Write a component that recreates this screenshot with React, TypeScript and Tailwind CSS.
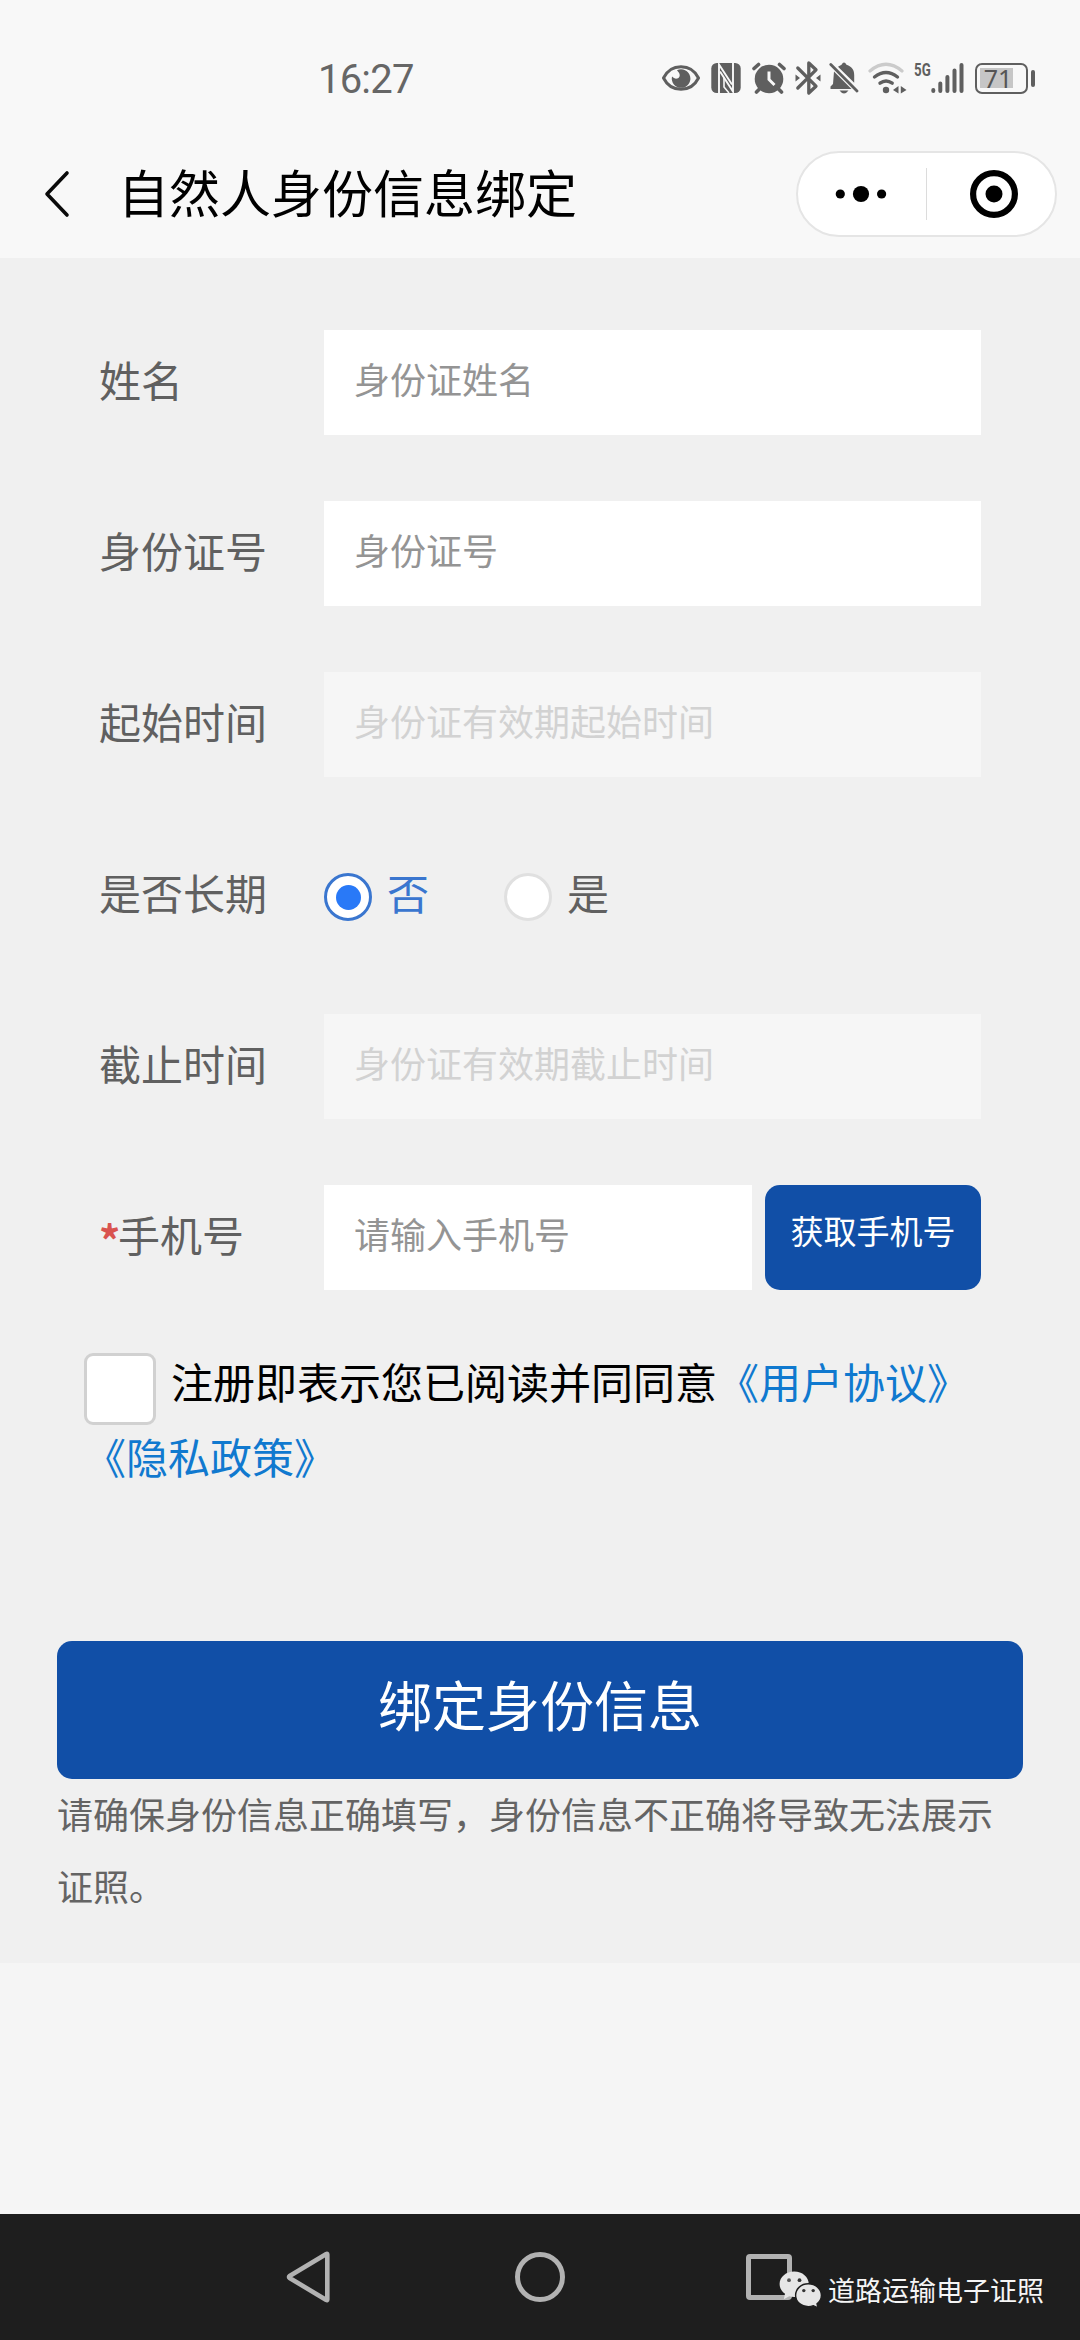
import { useState } from 'react';

type FieldProps = { label: string; placeholder: string; disabled?: boolean };

function EyeIcon() {
  return (
    <svg width="38" height="36" viewBox="0 0 38 36">
      <path d="M1.5 18 C9 3 29 3 36.5 18 C29 33 9 33 1.5 18 Z" fill="none" stroke="#5f5f5f" strokeWidth="3" strokeLinejoin="round" />
      <path d="M15 10.2 A 9.3 9.3 0 1 1 10 16.6 Q 13 20 16.5 18 Q 19.5 15 15 10.2 Z" fill="#5f5f5f" />
    </svg>
  );
}

function NfcIcon() {
  return (
    <svg width="30" height="36" viewBox="0 0 30 36">
      <rect x="0.3" y="3" width="29.4" height="30" rx="5.5" fill="#5f5f5f" />
      <path d="M8 33 V4.5 L21 24.5" fill="none" stroke="#f8f8f8" strokeWidth="1.9" />
      <path d="M22 3 V31.5 L9 11.5" fill="none" stroke="#f8f8f8" strokeWidth="1.9" />
      <path d="M13 17.5 V27 L18 33" fill="none" stroke="#f8f8f8" strokeWidth="1.6" />
    </svg>
  );
}

function AlarmIcon() {
  return (
    <svg width="34" height="36" viewBox="0 0 34 36">
      <circle cx="17" cy="19" r="14.3" fill="#5f5f5f" />
      <path d="M2 8.5 L6.5 4.5 M32 8.5 L27.5 4.5 M4.5 32 L7 29.5 M29.5 32 L27 29.5" stroke="#5f5f5f" strokeWidth="3.6" strokeLinecap="round" />
      <path d="M17 11.5 V19.5 L22.5 25" fill="none" stroke="#f8f8f8" strokeWidth="3" />
    </svg>
  );
}

function BluetoothIcon() {
  return (
    <svg width="26" height="36" viewBox="0 0 26 36">
      <path d="M2.8 8 L21 26.2 L13.8 33 V3 L21 9.8 L2.8 28" fill="none" stroke="#5f5f5f" strokeWidth="3.3" strokeLinecap="round" strokeLinejoin="round" />
      <path d="M0.5 14.5 L5 18 L0.5 21.5 Z M25.5 14.5 L21 18 L25.5 21.5 Z" fill="#5f5f5f" />
    </svg>
  );
}

function BellOffIcon() {
  return (
    <svg width="30" height="36" viewBox="0 0 30 36">
      <path d="M5 11.5 L22.5 29 H1.5 V26.5 L4 24 Z" fill="#5f5f5f" />
      <path d="M9 6.8 L12.5 4.7 Q15 0.5 17.5 4.7 C23 6.5 25.2 10 25.2 15 V22.8 Z" fill="#5f5f5f" />
      <path d="M1.8 4.5 L28 31" stroke="#5f5f5f" strokeWidth="2.8" strokeLinecap="round" />
      <path d="M10.5 30.5 H19.5 Q15 36.5 10.5 30.5 Z" fill="#5f5f5f" />
    </svg>
  );
}

function WifiIcon() {
  return (
    <svg width="40" height="36" viewBox="0 0 40 36">
      <path d="M3 11 Q19 -2.5 35 11" fill="none" stroke="#cbcbcb" strokeWidth="3.2" strokeLinecap="round" />
      <path d="M7.5 17 Q19 7.8 30.5 17" fill="none" stroke="#5f5f5f" strokeWidth="3.4" strokeLinecap="round" />
      <path d="M13 23.2 Q19 18.8 25.2 23.2" fill="none" stroke="#5f5f5f" strokeWidth="3.4" strokeLinecap="round" />
      <circle cx="19" cy="30" r="3.2" fill="#5f5f5f" />
      <path d="M31.5 26 V33.5 L26 30 Z M33.8 26 V33.5 L39.5 30 Z" fill="#5f5f5f" />
    </svg>
  );
}

function SignalIcon() {
  return (
    <svg width="34" height="36" viewBox="0 0 34 36">
      <g stroke="#5f5f5f" strokeWidth="4" strokeLinecap="round">
        <path d="M2.3 30 V31 M9.3 23.5 V31 M16.4 17 V31 M23.5 10.5 V31 M30.5 5 V31" />
      </g>
    </svg>
  );
}

function Battery({ level }: { level: number }) {
  return (
    <div className="flex items-center gap-[3px]">
      <div className="flex h-[31px] w-[53px] items-center rounded-[7px] border-[2.5px] border-[#5f5f5f] px-[3px]">
        <div className="flex h-[20px] w-[33px] items-center justify-center bg-[#c6c6c6]">
          <span className="pl-[3px] font-['Noto_Sans',sans-serif] text-[25px] leading-none text-[#555]">{level}</span>
        </div>
      </div>
      <div className="h-[17px] w-[4px] rounded-full bg-[#5f5f5f]" />
    </div>
  );
}

function StatusBar() {
  return (
    <div className="flex h-[128px] items-end justify-between pr-[45px] pb-[32px] pl-[318px]">
      <span className="h-[36px] pt-[2px] font-['Roboto',sans-serif] text-[40px] leading-[36px] tracking-[-0.8px] text-[#666]">16:27</span>
      <div className="flex h-[36px] items-center">
        <EyeIcon />
        <div className="ml-[11px]"><NfcIcon /></div>
        <div className="ml-[11px]"><AlarmIcon /></div>
        <div className="ml-[9px]"><BluetoothIcon /></div>
        <div className="ml-[8px]"><BellOffIcon /></div>
        <div className="ml-[8px]"><WifiIcon /></div>
        <div className="ml-[7px] flex h-[36px] items-start">
          <span className="w-[17px] origin-left scale-x-[0.7] pt-[1px] font-['Roboto',sans-serif] text-[19px] leading-[18px] font-bold text-[#5f5f5f]">5G</span>
          <SignalIcon />
        </div>
        <div className="ml-[10px]"><Battery level={71} /></div>
      </div>
    </div>
  );
}

function TitleBar() {
  return (
    <div className="flex h-[130px] items-center pt-[2px] pr-[23px] pl-[43px]">
      <svg width="28" height="48" viewBox="0 0 28 48" className="mb-[1px]">
        <path d="M24 3 L4 24 L24 45" fill="none" stroke="#0a0a0a" strokeWidth="3.6" strokeLinecap="round" strokeLinejoin="round" />
      </svg>
      <h1 className="ml-[47px] flex-1 pb-[6px] text-[51px] leading-[60px] text-black">自然人身份信息绑定</h1>
      <div className="flex h-[86px] w-[261px] items-center rounded-full border-2 border-[#e5e5e5] bg-white">
        <svg width="128" height="52" viewBox="0 0 128 52">
          <circle cx="42.3" cy="26" r="4.6" />
          <circle cx="63" cy="26" r="8.1" />
          <circle cx="83.6" cy="26" r="4.6" />
        </svg>
        <div className="h-[52px] w-px bg-[#dcdcdc]" />
        <svg width="128" height="52" viewBox="0 0 128 52">
          <circle cx="67" cy="26" r="20.9" fill="none" stroke="#000" strokeWidth="6.2" />
          <circle cx="67" cy="26" r="8.5" />
        </svg>
      </div>
    </div>
  );
}

function Label({ children }: { children: React.ReactNode }) {
  return <div className="w-[225px] shrink-0 pb-[8px] text-[42px] leading-[60px] text-[#606060]">{children}</div>;
}

function Field({ label, placeholder, disabled = false }: FieldProps) {
  return (
    <div className="flex h-[105px] items-center">
      <Label>{label}</Label>
      <div
        className={
          disabled
            ? 'flex h-full flex-1 items-center bg-[#f6f6f6] px-[30px] pb-[10px] text-[36px] text-[#d2d2d2]'
            : 'flex h-full flex-1 items-center bg-white px-[30px] pb-[10px] text-[36px] text-[#949494]'
        }
      >
        {placeholder}
      </div>
    </div>
  );
}

function Radio({ label, checked, onSelect }: { label: string; checked: boolean; onSelect: () => void }) {
  return (
    <button onClick={onSelect} className="flex items-center gap-[15px]">
      <span
        className={
          checked
            ? 'flex size-[48px] items-center justify-center rounded-full border-3 border-[#3a76cf] bg-white'
            : 'flex size-[48px] items-center justify-center rounded-full border-3 border-[#e0e0e0] bg-white'
        }
      >
        {checked && <span className="size-[25px] rounded-full bg-[#2979f7]" />}
      </span>
      <span
        className={
          checked
            ? 'pb-[11px] text-[42px] leading-[60px] text-[#3a76cf]'
            : 'pb-[11px] text-[42px] leading-[60px] text-[#606060]'
        }
      >
        {label}
      </span>
    </button>
  );
}

function NavBar() {
  return (
    <div className="relative flex h-[126px] items-center bg-[#1e1e1e] pl-[284px]">
      <svg width="50" height="56" viewBox="0 0 50 56">
        <path d="M43.3 5.5 V50.5 Q43.3 51.5 42.3 51 L5.6 29 Q4.4 28 5.6 27 L42.3 5 Q43.3 4.5 43.3 5.5 Z" fill="none" stroke="#b2b2b2" strokeWidth="4.6" strokeLinejoin="round" />
      </svg>
      <div className="ml-[181px] size-[50px] rounded-full border-[5px] border-[#b2b2b2]" />
      <div className="ml-[181px] size-[46px] rounded-[4px] border-[5px] border-[#b2b2b2]" />

      {/* account watermark over the recents button */}
      <div className="absolute top-[55px] left-[779px] flex items-center">
        <svg width="44" height="40" viewBox="0 0 44 40">
          <path d="M15.2 1.5 C7 1.5 0.6 7 0.6 14 C0.6 18 2.6 21.4 6 23.8 L4.8 29.2 L10.2 26.2 C12 26.7 13.6 27 15.2 27 C23.4 27 29.8 21.5 29.8 14.2 C29.8 7 23.4 1.5 15.2 1.5 Z" fill="#e6e6e6" />
          <circle cx="10" cy="10.2" r="1.9" fill="#555" />
          <circle cx="20.5" cy="10.2" r="1.9" fill="#333" />
          <path d="M29.3 13.8 C22.2 13.8 16.6 18.8 16.6 25.3 C16.6 31.8 22.2 36.6 29.3 36.6 C31.2 36.6 32.8 36.3 34.4 35.7 L39 38 L38 33.7 C40.8 31.6 42.4 28.6 42.4 25.3 C42.4 18.8 36.6 13.8 29.3 13.8 Z" fill="#e6e6e6" stroke="#1e1e1e" strokeWidth="1.4" />
          <circle cx="24.8" cy="20.6" r="1.7" fill="#333" />
          <circle cx="34.2" cy="20.6" r="1.7" fill="#333" />
        </svg>
        <span className="ml-[5px] pt-px text-[27px] leading-[40px] text-[#f5f5f5]">道路运输电子证照</span>
      </div>
    </div>
  );
}

export default function App() {
  const [longTerm, setLongTerm] = useState(false);
  const [agreed, setAgreed] = useState(false);

  return (
    <main className="flex h-[2340px] w-[1080px] flex-col overflow-hidden bg-[#f5f5f5] font-['Noto_Sans_CJK_SC',sans-serif]">
      <header className="h-[258px] bg-[#f8f8f8]">
        <StatusBar />
        <TitleBar />
      </header>

      <section className="h-[1705px] bg-[#f0f0f0] pt-[72px]">
        <div className="flex flex-col gap-[66px] pr-[99px] pl-[99px]">
          <Field label="姓名" placeholder="身份证姓名" />
          <Field label="身份证号" placeholder="身份证号" />
          <Field label="起始时间" placeholder="身份证有效期起始时间" disabled />

          <div className="flex h-[105px] items-center">
            <Label>是否长期</Label>
            <div className="flex gap-[75px] pt-[3px]">
              <Radio label="否" checked={!longTerm} onSelect={() => setLongTerm(false)} />
              <Radio label="是" checked={longTerm} onSelect={() => setLongTerm(true)} />
            </div>
          </div>

          <Field label="截止时间" placeholder="身份证有效期截止时间" disabled />

          <div className="flex h-[105px] items-center">
            <Label>
              <span className="relative top-[5px] inline-block w-[19px] font-bold text-[#d9534f]">*</span>手机号
            </Label>
            <div className="flex h-full flex-1 items-center bg-white px-[30px] pb-[10px] text-[36px] text-[#949494]">请输入手机号</div>
            <button className="ml-[13px] h-full w-[216px] rounded-[15px] bg-[#114fa7] pb-[14px] text-[33px] text-white">获取手机号</button>
          </div>
        </div>

        {/* agreement */}
        <div className="mt-[63px] h-[149px] pl-[84px]">
          <div className="flex h-[75px] items-start">
            <button
              aria-pressed={agreed}
              onClick={() => setAgreed(!agreed)}
              className="size-[72px] shrink-0 rounded-[9px] border-3 border-[#d1d1d1] bg-white"
            />
            <p className="ml-[15px] text-[42px] leading-[56px] text-black">
              注册即表示您已阅读并同同意<a className="text-[#1079cf]">《用户协议》</a>
            </p>
          </div>
          <a className="block text-[42px] leading-[55px] text-[#1079cf]">《隐私政策》</a>
        </div>

        <div className="mt-[139px] px-[57px]">
          <button className="block h-[138px] w-full rounded-[15px] bg-[#114fa7] pb-[13px] text-[54px] text-white">绑定身份信息</button>
          <p className="-mt-[2px] text-[36px] leading-[72px] text-[#646464]">
            请确保身份信息正确填写，身份信息不正确将导致无法展示证照。
          </p>
        </div>
      </section>

      <div className="flex-1" />
      <NavBar />
    </main>
  );
}
